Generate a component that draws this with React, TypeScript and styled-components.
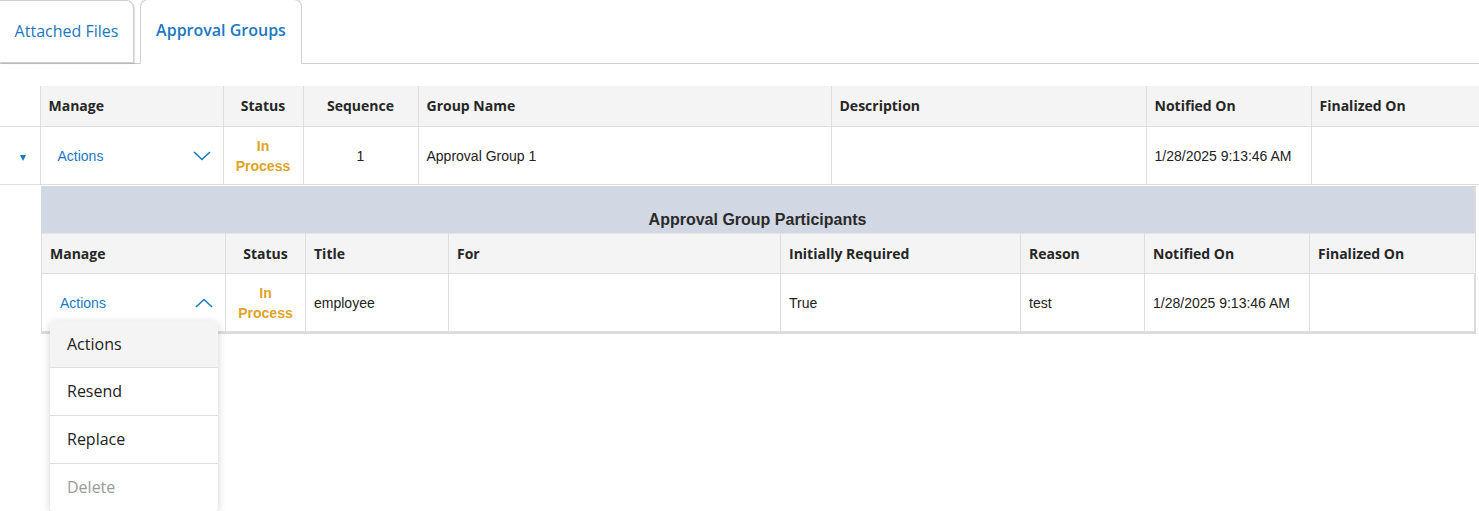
import React from "react";
import styled, { createGlobalStyle } from "styled-components";

const GlobalStyle = createGlobalStyle`
    html, body {
        margin: 0;
        padding: 0;
        background: #fff;
        font-family: "Liberation Sans", Arial, sans-serif;
        color: #222;
    }
`;

const Page = styled.div`
    width: 1479px;
    height: 511px;
    overflow: hidden;
`;

const TabBar = styled.div`
    display: flex;
    align-items: flex-end;
    gap: 6px;
    height: 64px;
    border-bottom: 1px solid #cfcfcf;
    box-sizing: border-box;
`;

const Tab = styled.div<{ $active?: boolean }>`
    box-sizing: border-box;
    display: flex;
    align-items: center;
    justify-content: center;
    height: ${(p) => (p.$active ? "65px" : "63px")};
    width: ${(p) => (p.$active ? "162px" : "134px")};
    margin-bottom: ${(p) => (p.$active ? "-1px" : "0")};
    padding-bottom: ${(p) => (p.$active ? "4px" : "2px")};
    border: 1px solid #cfcfcf;
    border-left: ${(p) => (p.$active ? "1px solid #cfcfcf" : "none")};
    border-bottom: ${(p) => (p.$active ? "1px solid #fff" : "1px solid #cfcfcf")};
    border-radius: ${(p) => (p.$active ? "8px 8px 0 0" : "0 8px 0 0")};
    background: #fff;
    box-shadow: ${(p) => (p.$active ? "none" : "1px 1px 1px rgba(0,0,0,0.12)")};
    font-family: "Open Sans", sans-serif;
    font-size: 16px;
    font-weight: ${(p) => (p.$active ? 600 : 400)};
    color: #1a78c2;
`;

const Grid = styled.table`
    margin-top: 22px;
    width: 1479px;
    border-collapse: collapse;
    table-layout: fixed;
`;

const Col = styled.col<{ $w: number }>`
    width: ${(p) => p.$w}px;
`;

const HeadCell = styled.th<{ $center?: boolean; $blank?: boolean }>`
    height: 40px;
    padding: 0 8px;
    box-sizing: border-box;
    background: ${(p) => (p.$blank ? "#fff" : "#f4f4f4")};
    border-left: ${(p) => (p.$blank ? "none" : "1px solid #dedede")};
    border-bottom: 1px solid #dedede;
    text-align: ${(p) => (p.$center ? "center" : "left")};
    font-family: "Open Sans", sans-serif;
    font-size: 14px;
    font-weight: 700;
    color: #262626;
    white-space: nowrap;
`;

const Cell = styled.td<{ $center?: boolean; $blank?: boolean }>`
    height: 58px;
    padding: 1px 8px 0;
    box-sizing: border-box;
    border-left: ${(p) => (p.$blank ? "none" : "1px solid #dedede")};
    border-bottom: 1px solid #dedede;
    text-align: ${(p) => (p.$center ? "center" : "left")};
    vertical-align: middle;
    font-size: 14px;
    color: #222;
`;

const NestCell = styled.td`
    padding: 1px 0 0 1px;
    border: none;
`;

const Nested = styled.div`
    position: relative;
    width: 1433px;
    border-right: 2px solid #dcdcdc;
    border-bottom: 2px solid #dcdcdc;
`;

const Band = styled.div`
    height: 47px;
    box-sizing: border-box;
    padding-top: 25px;
    background: #d1d8e3;
    text-align: center;
    font-size: 16px;
    font-weight: 700;
    color: #2a2a2a;
`;

const SubGrid = styled.table`
    width: 100%;
    border-collapse: collapse;
    table-layout: fixed;
    border-top: 1px solid #e6e6e6;
`;

const Expander = styled.span`
    display: inline-block;
    margin-left: 12px;
    width: 0;
    height: 0;
    border-left: 3.5px solid transparent;
    border-right: 3.5px solid transparent;
    border-top: 6px solid #1a78c2;
`;

const ActionsToggle = styled.div<{ $inset: number }>`
    display: flex;
    align-items: center;
    justify-content: space-between;
    padding: 0 4px 0 ${(p) => p.$inset}px;
    color: #1a78c2;
    font-size: 14px;
`;

const Status = styled.span`
    display: inline-block;
    line-height: 20px;
    font-weight: 700;
    color: #e0a326;
`;

const Menu = styled.ul`
    position: absolute;
    left: 9px;
    top: 135px;
    width: 168px;
    margin: 0;
    padding: 0;
    list-style: none;
    background: #fff;
    border-radius: 4px;
    box-shadow: 0 2px 8px rgba(0, 0, 0, 0.18);
    overflow: hidden;
    z-index: 5;
`;

const MenuItem = styled.li<{ $disabled?: boolean; $selected?: boolean }>`
    height: 48px;
    box-sizing: border-box;
    display: flex;
    align-items: center;
    padding-left: 17px;
    border-top: 1px solid #dedede;
    background: ${(p) => (p.$selected ? "#f4f4f4" : "#fff")};
    font-family: "Open Sans", sans-serif;
    font-size: 16px;
    color: ${(p) => (p.$disabled ? "#9a9a9a" : "#222")};
    &:first-child {
        border-top: none;
        height: 46px;
    }
`;

const Chevron = ({ up }: { up?: boolean }) => (
    <svg width="18" height="10" viewBox="0 0 18 10">
        <polyline
            points={up ? "1,9 9,1.5 17,9" : "1,1 9,8.5 17,1"}
            fill="none"
            stroke="#1a78c2"
            strokeWidth="1.6"
        />
    </svg>
);

const mainCols = [40, 183, 80, 115, 413, 315, 165, 168];
const subCols = [184, 80, 143, 332, 240, 124, 165, 165];

const App = () => {
    return (
        <Page>
            <GlobalStyle />
            <TabBar>
                <Tab>Attached Files</Tab>
                <Tab $active>Approval Groups</Tab>
            </TabBar>

            <Grid>
                <colgroup>
                    {mainCols.map((w, i) => (
                        <Col key={i} $w={w} />
                    ))}
                </colgroup>
                <thead>
                    <tr>
                        <HeadCell $blank />
                        <HeadCell>Manage</HeadCell>
                        <HeadCell $center>Status</HeadCell>
                        <HeadCell $center>Sequence</HeadCell>
                        <HeadCell>Group Name</HeadCell>
                        <HeadCell>Description</HeadCell>
                        <HeadCell>Notified On</HeadCell>
                        <HeadCell>Finalized On</HeadCell>
                    </tr>
                </thead>
                <tbody>
                    <tr>
                        <Cell $blank>
                            <Expander />
                        </Cell>
                        <Cell>
                            <ActionsToggle $inset={9}>
                                Actions
                                <Chevron />
                            </ActionsToggle>
                        </Cell>
                        <Cell $center>
                            <Status>In<br />Process</Status>
                        </Cell>
                        <Cell $center>1</Cell>
                        <Cell>Approval Group 1</Cell>
                        <Cell></Cell>
                        <Cell>1/28/2025 9:13:46 AM</Cell>
                        <Cell></Cell>
                    </tr>
                    <tr>
                        <td />
                        <NestCell colSpan={7}>
                            <Nested>
                                <Band>Approval Group Participants</Band>
                                <SubGrid>
                                    <colgroup>
                                        {subCols.map((w, i) => (
                                            <Col key={i} $w={w} />
                                        ))}
                                    </colgroup>
                                    <thead>
                                        <tr>
                                            <HeadCell>Manage</HeadCell>
                                            <HeadCell $center>Status</HeadCell>
                                            <HeadCell>Title</HeadCell>
                                            <HeadCell>For</HeadCell>
                                            <HeadCell>Initially Required</HeadCell>
                                            <HeadCell>Reason</HeadCell>
                                            <HeadCell>Notified On</HeadCell>
                                            <HeadCell>Finalized On</HeadCell>
                                        </tr>
                                    </thead>
                                    <tbody>
                                        <tr>
                                            <Cell>
                                                <ActionsToggle $inset={10}>
                                                    Actions
                                                    <Chevron up />
                                                </ActionsToggle>
                                            </Cell>
                                            <Cell $center>
                                                <Status>In<br />Process</Status>
                                            </Cell>
                                            <Cell>employee</Cell>
                                            <Cell></Cell>
                                            <Cell>True</Cell>
                                            <Cell>test</Cell>
                                            <Cell>1/28/2025 9:13:46 AM</Cell>
                                            <Cell></Cell>
                                        </tr>
                                    </tbody>
                                </SubGrid>
                                <Menu>
                                    <MenuItem $selected>Actions</MenuItem>
                                    <MenuItem>Resend</MenuItem>
                                    <MenuItem>Replace</MenuItem>
                                    <MenuItem $disabled>Delete</MenuItem>
                                </Menu>
                            </Nested>
                        </NestCell>
                    </tr>
                </tbody>
            </Grid>
        </Page>
    );
};

export default App;
